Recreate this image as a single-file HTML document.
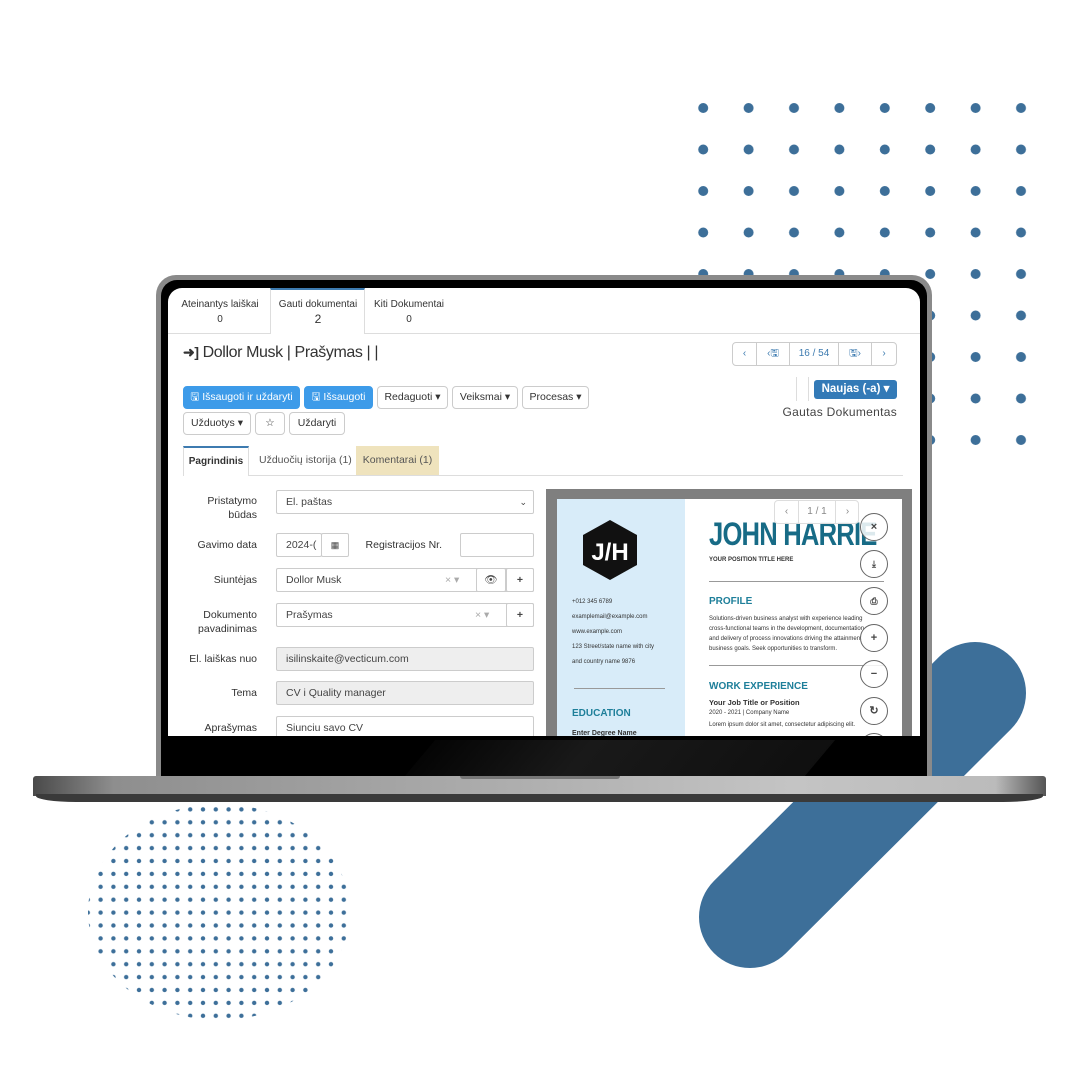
<!DOCTYPE html>
<html><head><meta charset="utf-8"><style>
*{box-sizing:border-box;margin:0;padding:0}
body{width:1080px;height:1080px;background:#fff;position:relative;overflow:hidden;font-family:"Liberation Sans",sans-serif;color:#333}
.abs{position:absolute}
.scr{position:absolute;left:168px;top:288px;width:752px;height:448px;background:#fff;border-radius:14px 14px 0 0;overflow:hidden;font-size:11px}
.btn{position:absolute;height:23px;border:1px solid #ccc;border-radius:4px;background:#fff;font-size:10.5px;line-height:21px;text-align:center;color:#333;white-space:nowrap}
.bb{background:#3d9be9;border-color:#3d9be9;color:#fff}
.lbl{position:absolute;text-align:right;font-size:10.5px;color:#333;line-height:14px}
.inp{position:absolute;height:24px;border:1px solid #ccc;border-radius:2px;background:#fff;font-size:10.5px;line-height:22px;padding-left:9px;color:#444}
.gr{background:#eee}
.cv{font-size:6px;color:#333}
.circ{position:absolute;left:692px;width:28px;height:28px;border:1px solid #666;border-radius:50%;background:rgba(255,255,255,.85);text-align:center;line-height:26px;font-size:11px;color:#444;font-weight:bold}
.tab{position:absolute;text-align:center;font-size:10px;line-height:15px;white-space:nowrap}
</style></head><body>
<svg class="abs" style="left:0;top:0" width="1080" height="1080">
<defs><pattern id="p1" x="680.5" y="86.5" width="45.4" height="41.5" patternUnits="userSpaceOnUse"><circle cx="22.7" cy="21.5" r="5" fill="#3d6f99"/></pattern>
<pattern id="p2" x="107" y="803" width="12.8" height="12.9" patternUnits="userSpaceOnUse"><circle cx="6.4" cy="6.4" r="2.2" fill="#3d6f99"/></pattern></defs>
<rect x="690" y="95" width="345" height="355" fill="url(#p1)"/>
<ellipse cx="219" cy="912" rx="131" ry="108" fill="url(#p2)"/>
<line x1="975" y1="693" x2="750" y2="917" stroke="#3d6f99" stroke-width="102" stroke-linecap="round"/>
</svg>
<div class="abs" style="left:156px;top:275px;width:776px;height:505px;background:#8a8a8a;border-radius:20px 20px 4px 4px"></div>
<div class="abs" style="left:161px;top:280px;width:766px;height:498px;background:#000;border-radius:16px 16px 2px 2px"></div>
<div class="abs" style="left:420px;top:740px;width:400px;height:36px;background:linear-gradient(90deg,#050505,#1c1c1c 40%,#111);transform:skewX(-40deg);opacity:.9"></div>
<div class="abs" style="left:33px;top:776px;width:1013px;height:20px;background:linear-gradient(90deg,#4a4a4a 0%,#8e8e8e 8%,#a8a8a8 40%,#c4c4c4 75%,#bbb 95%,#555 100%);border-radius:3px 3px 0 0"></div>
<div class="abs" style="left:36px;top:794px;width:1007px;height:8px;background:#3a3a3a;border-radius:0 0 40px 40px / 0 0 6px 6px"></div>
<div class="abs" style="left:460px;top:776px;width:160px;height:3px;background:#777;border-radius:0 0 4px 4px"></div>

<div class="scr">
 <div class="abs" style="left:0;top:45px;width:752px;height:1px;background:#ddd"></div>
 <div class="abs" style="left:102px;top:0;width:95px;height:46px;border:1px solid #ddd;border-top:2px solid #3d7bb0;border-bottom:none;background:#fff"></div>
 <div class="tab" style="left:8px;top:9px;width:88px">Ateinantys laiškai<br>0</div>
 <div class="tab" style="left:104px;top:9px;width:92px">Gauti dokumentai<br><span style="font-size:12px">2</span></div>
 <div class="tab" style="left:198px;top:9px;width:86px">Kiti Dokumentai<br>0</div>
 <div class="abs" style="left:15px;top:56px;font-size:16px;color:#333;letter-spacing:-.4px;white-space:nowrap"><b style="font-size:14px">➜]</b> Dollor Musk | Prašymas | |</div>
 <div class="abs" style="left:564px;top:54px;width:165px;height:24px;border:1px solid #ccc;border-radius:4px;font-size:10px;color:#3d7bb0;line-height:22px">
  <span class="abs" style="left:0;width:24px;text-align:center;border-right:1px solid #ccc;height:22px">‹</span>
  <span class="abs" style="left:24px;width:33px;text-align:center;border-right:1px solid #ccc;height:22px">‹🖫</span>
  <span class="abs" style="left:57px;width:49px;text-align:center;border-right:1px solid #ccc;height:22px">16 / 54</span>
  <span class="abs" style="left:106px;width:33px;text-align:center;border-right:1px solid #ccc;height:22px">🖫›</span>
  <span class="abs" style="left:139px;width:24px;text-align:center">›</span>
 </div>
 <div class="abs" style="left:628px;top:89px;width:1px;height:24px;background:#ddd"></div>
 <div class="abs" style="left:640px;top:89px;width:1px;height:24px;background:#ddd"></div>
 <div class="abs" style="left:646px;top:92px;width:83px;height:19px;background:#337ab7;border-radius:3px;color:#fff;font-weight:bold;font-size:11.5px;line-height:19px;text-align:center">Naujas (-a) ▾</div>
 <div class="abs" style="left:600px;top:117px;width:129px;text-align:right;font-size:12px;color:#444;letter-spacing:.3px">Gautas Dokumentas</div>
 <div class="btn bb" style="left:15px;top:98px;width:117px">🖫 Išsaugoti ir uždaryti</div>
 <div class="btn bb" style="left:136px;top:98px;width:69px">🖫 Išsaugoti</div>
 <div class="btn" style="left:209px;top:98px;width:71px">Redaguoti ▾</div>
 <div class="btn" style="left:284px;top:98px;width:66px">Veiksmai ▾</div>
 <div class="btn" style="left:354px;top:98px;width:67px">Procesas ▾</div>
 <div class="btn" style="left:15px;top:124px;width:68px">Užduotys ▾</div>
 <div class="btn" style="left:87px;top:124px;width:30px">☆</div>
 <div class="btn" style="left:121px;top:124px;width:56px">Uždaryti</div>
 <div class="abs" style="left:15px;top:187px;width:720px;height:1px;background:#ddd"></div>
 <div class="abs" style="left:15px;top:158px;width:66px;height:30px;border:1px solid #ddd;border-top:2px solid #3d7bb0;border-bottom:none;background:#fff;font-size:10px;font-weight:bold;text-align:center;line-height:28px">Pagrindinis</div>
 <div class="abs" style="left:91px;top:166px;font-size:10.5px;color:#555">Užduočių istorija (1)</div>
 <div class="abs" style="left:188px;top:158px;width:83px;height:29px;background:#efe3bd;font-size:10.5px;text-align:center;line-height:29px;color:#555">Komentarai (1)</div>
 <div class="lbl" style="left:10px;top:206px;width:79px">Pristatymo<br>būdas</div>
 <div class="inp" style="left:108px;top:202px;width:258px">El. paštas<span class="abs" style="right:6px;font-size:9px">⌄</span></div>
 <div class="lbl" style="left:10px;top:250px;width:79px">Gavimo data</div>
 <div class="inp" style="left:108px;top:245px;width:46px">2024-(</div>
 <div class="inp" style="left:153px;top:245px;width:28px;padding:0;text-align:center;font-size:9px">▦</div>
 <div class="lbl" style="left:190px;top:250px;width:84px">Registracijos Nr.</div>
 <div class="inp" style="left:292px;top:245px;width:74px"></div>
 <div class="lbl" style="left:10px;top:285px;width:79px">Siuntėjas</div>
 <div class="inp" style="left:108px;top:280px;width:258px">Dollor Musk<span class="abs" style="left:168px;color:#aaa">× ▾</span></div>
 <div class="inp" style="left:308px;top:280px;width:30px;padding:0;text-align:center">👁</div>
 <div class="inp" style="left:338px;top:280px;width:28px;padding:0;text-align:center;font-weight:bold">+</div>
 <div class="lbl" style="left:10px;top:320px;width:79px">Dokumento<br>pavadinimas</div>
 <div class="inp" style="left:108px;top:315px;width:258px">Prašymas<span class="abs" style="left:198px;color:#aaa">× ▾</span></div>
 <div class="inp" style="left:338px;top:315px;width:28px;padding:0;text-align:center;font-weight:bold">+</div>
 <div class="lbl" style="left:10px;top:364px;width:79px">El. laiškas nuo</div>
 <div class="inp gr" style="left:108px;top:359px;width:258px">isilinskaite@vecticum.com</div>
 <div class="lbl" style="left:10px;top:398px;width:79px">Tema</div>
 <div class="inp gr" style="left:108px;top:393px;width:258px">CV i Quality manager</div>
 <div class="lbl" style="left:10px;top:433px;width:79px">Aprašymas</div>
 <div class="inp" style="left:108px;top:428px;width:258px;height:30px">Siunciu savo CV</div>
 <div class="abs" style="left:378px;top:201px;width:366px;height:260px;background:#7f7f7f"></div>
 <div class="abs" style="left:389px;top:211px;width:345px;height:260px;background:#fff"></div>
 <div class="abs" style="left:389px;top:211px;width:128px;height:260px;background:#d8ecf9"></div>
 <svg class="abs" style="left:412px;top:230px" width="60" height="64"><polygon points="30,2 57,17 57,47 30,62 3,47 3,17" fill="#111"/><text x="30" y="42" text-anchor="middle" fill="#fff" font-family="Liberation Sans Narrow,Liberation Sans,sans-serif" font-weight="bold" font-size="24">J/H</text></svg>
 <div class="abs cv" style="left:404px;top:307px;line-height:15px">+012 345 6789<br>examplemail@example.com<br>www.example.com<br>123 Street/state name with city<br>and country name 9876</div>
 <div class="abs" style="left:406px;top:400px;width:91px;height:1px;background:#999"></div>
 <div class="abs" style="left:404px;top:420px;font-size:10px;font-weight:bold;color:#1e7f9a">EDUCATION</div>
 <div class="abs" style="left:404px;top:442px;font-size:7px;font-weight:bold">Enter Degree Name</div>
 <div class="abs" style="left:541px;top:228px;font-size:32px;font-weight:bold;color:#176b86;transform:scaleX(.8);transform-origin:left;font-family:'Liberation Sans Narrow','Liberation Sans',sans-serif;letter-spacing:-1px;white-space:nowrap">JOHN HARRIE</div>
 <div class="abs" style="left:541px;top:269px;font-size:6px;font-weight:bold">YOUR POSITION TITLE HERE</div>
 <div class="abs" style="left:541px;top:293px;width:175px;height:1px;background:#999"></div>
 <div class="abs" style="left:541px;top:308px;font-size:10px;font-weight:bold;color:#1e7f9a">PROFILE</div>
 <div class="abs cv" style="left:541px;top:326px;line-height:10px;width:165px">Solutions-driven business analyst with experience leading cross-functional teams in the development, documentation and delivery of process innovations driving the attainment business goals. Seek opportunities to transform.</div>
 <div class="abs" style="left:541px;top:377px;width:175px;height:1px;background:#999"></div>
 <div class="abs" style="left:541px;top:393px;font-size:10px;font-weight:bold;color:#1e7f9a">WORK EXPERIENCE</div>
 <div class="abs" style="left:541px;top:410px;font-size:7.5px;font-weight:bold">Your Job Title or Position</div>
 <div class="abs cv" style="left:541px;top:422px">2020 - 2021 | Company Name</div>
 <div class="abs cv" style="left:541px;top:434px">Lorem ipsum dolor sit amet, consectetur adipiscing elit.</div>
 <div class="abs" style="left:606px;top:212px;width:85px;height:24px;border:1px solid #ddd;border-radius:4px;background:rgba(255,255,255,.9);font-size:10px;color:#888;line-height:22px">
  <span class="abs" style="left:0;width:24px;text-align:center;border-right:1px solid #ddd">‹</span><span class="abs" style="left:24px;width:36px;text-align:center">1 / 1</span><span class="abs" style="left:60px;width:24px;text-align:center;border-left:1px solid #ddd">›</span></div>
 <div class="circ" style="top:225px">×</div>
 <div class="circ" style="top:262px;font-size:9px">⤓</div>
 <div class="circ" style="top:299px;font-size:9px">⎙</div>
 <div class="circ" style="top:336px">+</div>
 <div class="circ" style="top:372px">−</div>
 <div class="circ" style="top:409px">↻</div>
 <div class="circ" style="top:445px"></div>
</div>
</body></html>
